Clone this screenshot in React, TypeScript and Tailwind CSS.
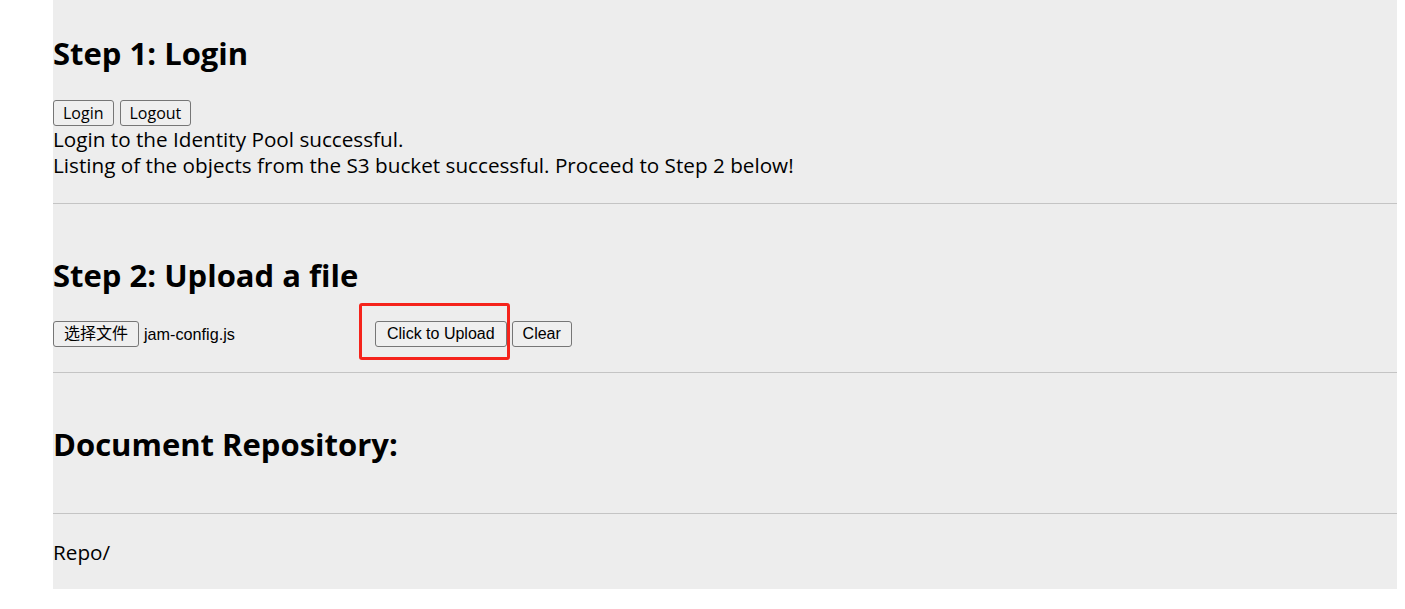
import React from 'react';

const btn =
  'h-[26px] rounded-[3px] border border-[#767676] bg-[#efefef] px-[9px] text-[16px] leading-none text-black';
const arial = "font-['Liberation_Sans','Noto_Sans_CJK_SC',sans-serif]";

const App: React.FC = () => {
  return (
    <div className="min-h-screen bg-white font-['Open_Sans','Noto_Sans_CJK_SC',sans-serif] text-black">
      <div className="ml-[53px] w-[1344px] bg-[#ededed] pb-[24px]">
        <h2 className="pt-[33px] text-[31px] font-bold leading-[40px]">Step 1: Login</h2>
        <div className="mt-[27px] flex gap-[6px]">
          <button className={`${btn} px-[8px]`}>Login</button>
          <button className={`${btn} px-[8px]`}>Logout</button>
        </div>
        <p className="text-[20.7px] leading-[26px]">Login to the Identity Pool successful.</p>
        <p className="text-[20.7px] leading-[26px]">
          Listing of the objects from the S3 bucket successful. Proceed to Step 2 below!
        </p>
        <hr className="mt-[25px] border-t border-[#c4c4c4]" />

        <h2 className="mt-[51px] text-[31px] font-bold leading-[40px]">Step 2: Upload a file</h2>
        <div className={`mt-[26px] flex items-center ${arial}`}>
          <div className="flex w-[322px] items-center">
            <button className={`${btn} px-[10px]`}>选择文件</button>
            <span className="ml-[5px] text-[16.2px]">jam-config.js</span>
          </div>
          <div className="relative">
            <button className={`${btn} px-[11px]`}>Click to Upload</button>
            <div className="pointer-events-none absolute left-[-16px] top-[-18px] h-[57px] w-[151px] rounded-[3px] border-[3px] border-[#f5231b]" />
          </div>
          <button className={`${btn} ml-[5px] px-[10px]`}>Clear</button>
        </div>
        <hr className="mt-[25px] border-t border-[#c4c4c4]" />

        <h2 className="mt-[51px] text-[31px] font-bold leading-[40px]">Document Repository:</h2>
        <hr className="mt-[49px] border-t border-[#c4c4c4]" />
        <p className="mt-[25px] text-[20.7px] leading-[26px]">Repo/</p>
      </div>
    </div>
  );
};

export default App;
